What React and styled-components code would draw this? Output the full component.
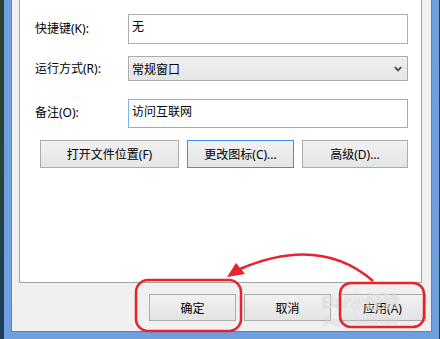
import React from "react";
import styled, { createGlobalStyle } from "styled-components";

const Global = createGlobalStyle`
  html, body { margin: 0; padding: 0; overflow: hidden; }
  body { font-family: "Noto Sans", "Noto Sans CJK SC", sans-serif; font-size: 12px; }
`;

const Screen = styled.div`
  position: relative;
  width: 440px;
  height: 339px;
  box-sizing: border-box;
  display: flex;
  padding: 0 1px 0 4px;
  background: linear-gradient(180deg, #2c4232 0%, #27453a 50%, #1d3d5e 100%);
  overflow: hidden;
`;

const Frame = styled.div`
  flex: 1;
  display: flex;
  padding: 0 7px 7px 7px;
  background: #6e9fdf;
`;

const Dialog = styled.div`
  flex: 1;
  display: flex;
  flex-direction: column;
  background: #f0f0f0;
  border: 1px solid #6a7f99;
  border-top: none;
`;

const TabWrap = styled.div`
  display: flex;
  padding: 0 9px 0 7px;
`;

const TabPage = styled.div`
  box-sizing: border-box;
  flex: 1;
  height: 283px;
  background: #ffffff;
  border: 1px solid #a3a3a3;
  border-top: none;
  padding: 14px 0 0 15px;
  display: flex;
  flex-direction: column;
`;

const Row = styled.div`
  display: flex;
  align-items: center;
  margin-bottom: ${(p) => p.$mb}px;
`;

const Label = styled.div`
  width: 93px;
  color: #000;
  line-height: 16px;
  white-space: nowrap;
  padding-top: ${(p) => p.$pt || 0}px;
  align-self: ${(p) => (p.$top ? "flex-start" : "center")};
`;

const TextBox = styled.div`
  box-sizing: border-box;
  width: 280px;
  height: ${(p) => p.$h}px;
  border: 1px solid ${(p) => (p.$focus ? "#7eb4ea" : "#abadb3")};
  background: #fff;
  padding: 4px 3px;
  line-height: 16px;
  color: #000;
`;

const Select = styled.div`
  box-sizing: border-box;
  width: 280px;
  height: 25px;
  border: 1px solid #acacac;
  background: linear-gradient(180deg, #f0f0f0 0%, #e5e5e5 100%);
  display: flex;
  align-items: center;
  justify-content: space-between;
  padding: 0 5px 0 3px;
  color: #000;
`;

const ButtonRow = styled.div`
  display: flex;
  gap: 8px;
  padding-left: 5px;
`;

const Btn = styled.div`
  box-sizing: border-box;
  width: ${(p) => p.$w}px;
  height: ${(p) => p.$h}px;
  border: 1px solid ${(p) => (p.$focus ? "#3d8ee6" : "#acacac")};
  background: linear-gradient(180deg, #f1f1f1 0%, #e4e4e4 100%);
  display: flex;
  align-items: center;
  justify-content: center;
  color: #000;
  white-space: nowrap;
`;

const BottomBar = styled.div`
  display: flex;
  justify-content: flex-end;
  gap: 8px;
  padding: 11px 5px 0 0;
`;

const Overlay = styled.svg`
  position: absolute;
  left: 0;
  top: 0;
  pointer-events: none;
`;

const Watermark = styled.div`
  position: absolute;
  left: 322px;
  top: 293px;
  display: flex;
  flex-direction: column;
  align-items: center;
  color: rgba(255, 255, 255, 0.5);
  text-shadow: 0 0 1px rgba(130, 130, 130, 0.4);
  pointer-events: none;
`;

const WmMain = styled.div`
  font-family: "Liberation Sans", "Noto Sans CJK SC", sans-serif;
  font-size: 17px;
  font-weight: bold;
  line-height: 20px;
`;

const WmSub = styled.div`
  font-family: "Liberation Sans", sans-serif;
  font-size: 9px;
  line-height: 10px;
  margin-top: 3px;
`;

export default function App() {
  return (
    <>
      <Global />
      <Screen>
        <Frame>
          <Dialog>
            <TabWrap>
              <TabPage>
                <Row $mb={12}>
                  <Label>快捷键(K):</Label>
                  <TextBox $h={30}>无</TextBox>
                </Row>
                <Row $mb={18}>
                  <Label>运行方式(R):</Label>
                  <Select>
                    <span>常规窗口</span>
                    <svg width="8" height="6" viewBox="0 0 8 6">
                      <polyline points="0.8,1 4,4.4 7.2,1" fill="none" stroke="#444" strokeWidth="1.8" />
                    </svg>
                  </Select>
                </Row>
                <Row $mb={12}>
                  <Label $top $pt={6}>备注(O):</Label>
                  <TextBox $h={29} $focus>访问互联网</TextBox>
                </Row>
                <ButtonRow>
                  <Btn $w={139} $h={28}>打开文件位置(F)</Btn>
                  <Btn $w={107} $h={28} $focus>更改图标(C)...</Btn>
                  <Btn $w={106} $h={28}>高级(D)...</Btn>
                </ButtonRow>
              </TabPage>
            </TabWrap>
            <BottomBar>
              <Btn $w={87} $h={27}>确定</Btn>
              <Btn $w={87} $h={27}>取消</Btn>
              <Btn $w={87} $h={27}>应用(A)</Btn>
            </BottomBar>
          </Dialog>
        </Frame>
        <Watermark>
          <WmMain>Bai❀经验</WmMain>
          <WmSub>jingyan.baidu.com</WmSub>
        </Watermark>
        <Overlay width="440" height="339" viewBox="0 0 440 339">
          <rect x="136" y="280" width="105" height="51" rx="12" ry="12" fill="none" stroke="#e8232b" strokeWidth="2.5" />
          <rect x="340" y="283" width="84" height="44" rx="11" ry="11" fill="none" stroke="#e8232b" strokeWidth="2.5" />
          <path d="M373 281 Q 320 235 240 269" fill="none" stroke="#e8232b" strokeWidth="2.5" />
          <polygon points="227,277 236,263 245,274" fill="#e8232b" />
        </Overlay>
      </Screen>
    </>
  );
}
